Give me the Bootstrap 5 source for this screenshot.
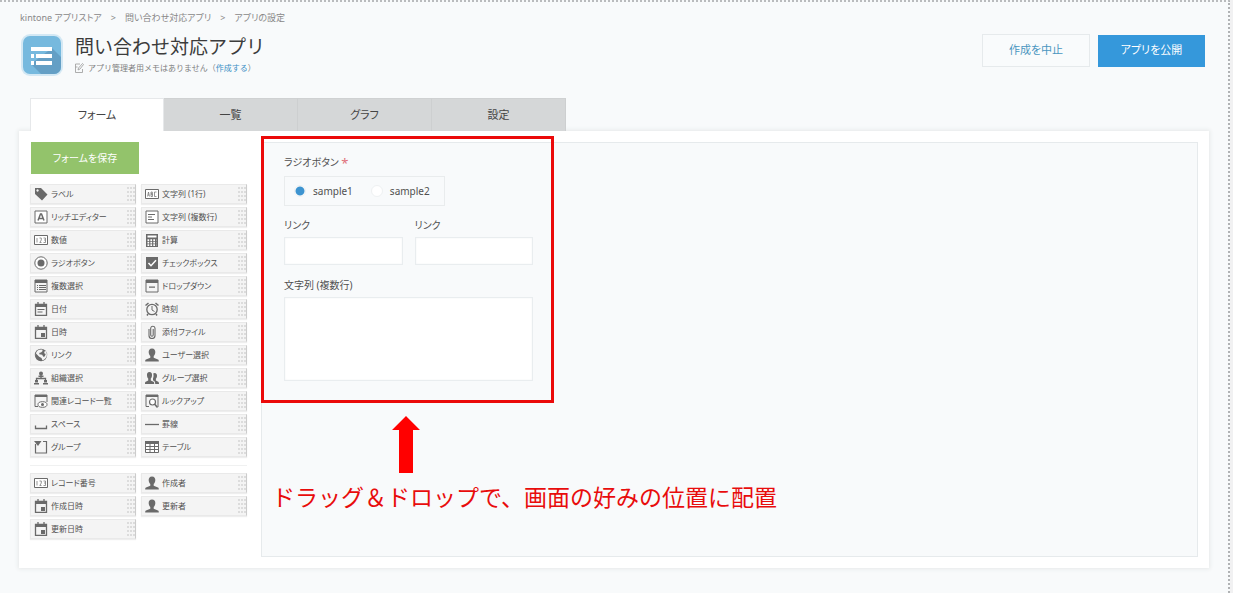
<!DOCTYPE html>
<html lang="ja">
<head>
<meta charset="utf-8">
<meta name="viewport" content="width=device-width, initial-scale=1">
<title>アプリの設定</title>
<link href="https://cdn.jsdelivr.net/npm/bootstrap@5.3.0/dist/css/bootstrap.min.css" rel="stylesheet">
<style>
  body { font-family: "Noto Sans", "Noto Sans CJK JP", sans-serif; font-size: 10px; line-height: 16px; color: #444; background: #f1f1f2; }
  body, button { font-feature-settings: "palt"; }
  a { color: #3a8fc4; text-decoration: none; }
  .shell { min-height: 100vh; margin-right: 3px; padding: 8px 19px 24px 19px; background: #f8fafb; border-top: 2px dotted #b9bbbd; border-right: 2px dotted #b0b2b4; }
  .crumbs { font-size: 9px; line-height: 16px; padding-left: 1px; --bs-breadcrumb-divider: ">"; }
  .crumbs .breadcrumb-item { color: #888; padding: 0; }
  .crumbs .breadcrumb-item a { color: #888; }
  .crumbs .breadcrumb-item + .breadcrumb-item::before { padding: 0 9px; color: #888; }
  .app-logo { width: 42px; height: 42px; margin: 0 12px 0 2px; }
  .app-title { font-size: 19px; line-height: 26px; font-weight: 400; color: #3c3c3c; font-feature-settings: normal; }
  .memo { font-size: 8px; line-height: 16px; color: #808080; font-feature-settings: normal; }
  .action { width: 108px; height: 33px; padding: 0; border-radius: 0; font-size: 11px; }
  .action-cancel { background: #f9fbfc; border: 1px solid #e6eaec; color: #4a96c0; }
  .action-publish { background: #3598db; border: 1px solid #3598db; color: #fff; width: 107px; height: 32px; }
  .action-save { background: #93c36b; border: 1px solid #93c36b; color: #fff; font-size: 10px; height: 32px; margin-left: 1px; }
  .app-tabs { padding-left: 11px; margin-top: 22px; border: 0; }
  .app-tabs .nav-link { width: 134px; height: 33px; padding: 0; border: 0; border-top: 1px solid #cfd1d2; border-right: 1px solid #cdcfd0; border-radius: 0; margin: 0; background: #d5d7d8; color: #444; font-size: 11px; text-align: center; }
  .app-tabs .nav-link.active { background: #fff; border-color: #e6e8ea; border-left: 1px solid #e6e8ea; color: #444; position: relative; z-index: 1; }
  .panel { background: #fff; padding: 11px; box-shadow: 0 0 4px 1px #e6e8e9; gap: 14px; }
  .palette { width: 217px; }
  .chips { display: grid; grid-template-columns: 1fr 1fr; gap: 3px 5px; }
  .save-row { margin-bottom: 10px; }
  .chip { display: flex; align-items: center; gap: 3px; height: 20px; padding: 0 0 1px 3px; border: 1px solid #e9e9e9; border-right-color: #ccc; background: #f4f4f4; color: #505050; font-size: 8px; line-height: 12px; text-align: left; white-space: nowrap; box-shadow: 0 1px 1px #eee; }
  .chip svg { width: 14px; height: 14px; color: #6a6a6a; flex: none; }
  .chip::after { content: ""; width: 8px; height: 14px; margin-left: auto; background: radial-gradient(circle at 1px 1px, #dcdcdc 1px, transparent 1px) 0 0 / 3px 4px; }
  .rule { height: 1px; background: #f0f1f1; margin: 8px 0 7px; }
  .stage { position: relative; min-height: 415px; border: 1px solid #e6eaec; background: #f8fafb; padding: 11px 22px; }
  .fields { width: 249px; }
  .fields label, .field-name { font-size: 10px; line-height: 16px; color: #505050; }
  .need { color: #e0707a; font-size: 13px; line-height: 12px; vertical-align: -2px; }
  .choices { width: 161px; height: 30px; border: 1px solid #e9eced; padding-left: 9px; gap: 7px; margin: 6px 0 11px; }
  .choices .form-check-input { width: 12px; height: 12px; margin: 0; background: #fff; border: 1px solid #eef1f2; box-shadow: none; }
  .choices .form-check-input:checked { background: radial-gradient(circle, #3d94d0 4px, #fff 5px); }
  .choices label + .form-check-input { margin-left: 11px; }
  .box { border: 1px solid #e9edef; border-radius: 0; background: #fff; padding: 4px; box-shadow: inset 0 0 2px #f0f2f3; font-size: 10px; resize: none; display: block; }
  .line { height: 28px; min-height: 28px; }
  .area { height: 84px; }
  .callout-box { position: absolute; left: -1px; top: -7px; width: 293px; height: 267px; border: 3px solid #eb0a0a; pointer-events: none; }
  .callout-note { position: absolute; left: 10px; top: 273px; color: #e80c0c; font-size: 23px; line-height: 32px; font-family: "Noto Sans CJK JP", sans-serif; font-feature-settings: normal; white-space: nowrap; }
  .callout-note svg { display: block; margin: 0 0 7px 120px; }
</style>
</head>
<body>
<svg class="d-none" aria-hidden="true">
  <defs>
    <symbol id="tag" viewBox="0 0 14 14"><path fill="currentColor" fill-rule="evenodd" d="M1 1h6l6.500 6.500-5.500 6L1 7zM3.500 2.300a1.200 1.200 0 1 0 .1 0z"/></symbol>
    <symbol id="abc" viewBox="0 0 14 14"><path fill="#fff" stroke="currentColor" d="M.5 2.500h13v9H.5z"/><path fill="none" stroke="currentColor" stroke-width=".7" d="M2.500 9.500 3.500 5l1 4.500M3 8h1M6 5v4.500h1.500V7H6h1.300V5zM11.500 5H9.500v4.500h2"/></symbol>
    <symbol id="rich" viewBox="0 0 14 14"><path fill="#fff" stroke="currentColor" d="M1 1h12v12H1z"/><path fill="none" stroke="currentColor" stroke-width="1.500" d="M4 10.500 6.500 4h1L10 10.500M5 8.500h4"/></symbol>
    <symbol id="multi" viewBox="0 0 14 14"><path fill="#fff" stroke="currentColor" d="M1 1h12v12H1z"/><path stroke="currentColor" d="M3 4.500h7M3 7h4M3 9.500h6"/></symbol>
    <symbol id="num" viewBox="0 0 14 14"><path fill="#fff" stroke="currentColor" d="M.5 2.500h13v9H.5z"/><path fill="none" stroke="currentColor" stroke-width=".7" d="M3 5v4.500M5.500 5H7.300v2L5.800 9.500h1.700M9.500 5h2v4.500h-2M10 7h1.500"/></symbol>
    <symbol id="calc" viewBox="0 0 14 14"><path fill="currentColor" d="M1 1h12v13H1z"/><path stroke="#fff" stroke-width="1.700" stroke-dasharray="1.700 1.200" d="M2.500 7.200h9M2.500 9.700h9M2.500 12.200h9"/><path fill="#fff" d="M2.500 2.500h9v2h-9z"/></symbol>
    <symbol id="radio" viewBox="0 0 14 14"><circle cx="7" cy="7" r="6.200" fill="#fff" stroke="currentColor"/><circle cx="7" cy="7" r="3.500" fill="currentColor"/></symbol>
    <symbol id="check" viewBox="0 0 14 14"><path fill="currentColor" d="M1 1h12v12H1z"/><path fill="none" stroke="#fff" stroke-width="1.500" d="m3.500 7 2.500 2.700 5-5.500"/></symbol>
    <symbol id="select" viewBox="0 0 14 14"><path fill="#f5f5f5" stroke="currentColor" d="M1 1h12v12H1z"/><path fill="currentColor" d="M1 1h12v3H1z"/><path stroke="currentColor" d="M3 6.500h1m1 0h7M3 8.500h1m1 0h7M3 10.500h1m1 0h7"/></symbol>
    <symbol id="drop" viewBox="0 0 14 14"><path fill="#f5f5f5" stroke="currentColor" d="M1 1h12v12H1z"/><path fill="currentColor" d="M1 1h12v3H1zM4 7.500h6v1.200H4z"/></symbol>
    <symbol id="date" viewBox="0 0 14 14"><path fill="none" stroke="currentColor" stroke-width="1.300" d="M1.500 2.500h11v10.800h-11zM4 0v3M10 0v3"/><path fill="currentColor" d="M1 2h12v3H1z"/><path stroke="currentColor" d="M3.500 7.500h7M3.500 10h5"/></symbol>
    <symbol id="clock" viewBox="0 0 14 14"><circle cx="7" cy="7.500" r="5.200" fill="none" stroke="currentColor" stroke-width="1.300"/><path fill="none" stroke="currentColor" d="M7 4v4l2.500 1.500"/><path stroke="currentColor" stroke-width="1.500" d="M.5 3.500 3.500 1M13.500 3.500 10.500 1M3 12l-1 1.500M11 12l1 1.500"/></symbol>
    <symbol id="datetime" viewBox="0 0 14 14"><path fill="none" stroke="currentColor" stroke-width="1.300" d="M1.500 2.500h11v10.800h-11zM4 0v3M10 0v3"/><path fill="currentColor" d="M1 2h12v3H1zM7 8h4v4H7z"/></symbol>
    <symbol id="clip" viewBox="0 0 14 14"><path fill="none" stroke="currentColor" stroke-width="1.100" d="M4 4v6.500a3 3 0 0 0 6 0V3a2.200 2.200 0 0 0-4.300 0v7a1.200 1.200 0 0 0 2.500 0V4"/></symbol>
    <symbol id="globe" viewBox="0 0 14 14"><circle cx="7" cy="7" r="6.200" fill="currentColor"/><path fill="#f4f4f4" d="M5 1.700 8.300 1.500 8.600 3 7 4.500l-1.500.3-.3 1.500 3 .4 1 2 1.500-.2 1-2.500-1.500-.8.200-1.700 1.300-.6c1.600 2.300 1.700 5 0 7.200-.9 1.200-2 1.900-3.300 2.200L7.500 10 5.200 8.700 2 5.500 1.700 8.500C1.500 5 2.500 2.700 5 1.700z"/></symbol>
    <symbol id="org" viewBox="0 0 14 14"><circle cx="7" cy="2.500" r="2" fill="currentColor"/><path fill="none" stroke="currentColor" stroke-width="1.300" d="M7 3v4M2.500 10V7.500h9V10"/><path fill="currentColor" d="M4.500 4.500h5V6h-5zM1 9h3v2.500H1zM10 9h3v2.500h-3zM0 12h5v1.500H0zM9 12h5v1.500H9z"/></symbol>
    <symbol id="user" viewBox="0 0 14 14"><path fill="currentColor" d="M7 .5c2.400 0 3.500 1.700 3.300 4C10.100 6.500 9.300 7.500 8.700 8v1.800l4.300 1.700c.7.400.8 1 .8 2H.2c0-1 .1-1.600.8-2l4.300-1.700V8C4.700 7.500 3.900 6.500 3.700 4.500 3.500 2.200 4.600.5 7 .5z"/></symbol>
    <symbol id="users" viewBox="0 0 14 14"><path fill="currentColor" d="M4.500 1C6.400 1 7.200 2.500 7 4.500c-.1 1.500-.6 2.500-1.200 3v2l2.700 1.300c.6.300.7 1 .7 2.200H0c0-1.200.1-1.900.7-2.200l2.500-1.300v-2C2.600 7 2.100 6 2 4.500 1.800 2.500 2.600 1 4.500 1zM9.500 2c1.900 0 2.700 1.500 2.500 3.200-.1 1.300-.6 2-1.100 2.500v1.800l2.300 1.300c.7.400.8 1.200.8 2.200h-3.800c0-1.700-.2-2.500-1.200-3L8 9.300V7.500c.6-1.500.8-3.200.2-5z"/></symbol>
    <symbol id="related" viewBox="0 0 14 14"><path fill="none" stroke="currentColor" d="M4 12.500H1V1h12v7"/><path fill="currentColor" d="M1 1h12v2H1z"/><ellipse cx="8.500" cy="10.500" rx="4.500" ry="2.800" fill="#fff" stroke="currentColor"/><circle cx="8.500" cy="10.500" r="1.500" fill="currentColor"/></symbol>
    <symbol id="lookup" viewBox="0 0 14 14"><path fill="none" stroke="currentColor" d="M4 12.500H1V1h12v12"/><path fill="currentColor" d="M1 1h12v2H1z"/><circle cx="7.500" cy="8" r="3" fill="#fff" stroke="currentColor" stroke-width="1.200"/><path stroke="currentColor" stroke-width="1.500" d="m9.500 10 3 3.500"/></symbol>
    <symbol id="space" viewBox="0 0 14 14"><path fill="none" stroke="currentColor" stroke-width="1.300" d="M1.500 8.500v3h11v-3"/></symbol>
    <symbol id="hr" viewBox="0 0 14 14"><path stroke="currentColor" stroke-width="1.300" d="M0 7.500h14"/></symbol>
    <symbol id="group" viewBox="0 0 14 14"><path fill="none" stroke="currentColor" stroke-width="1.200" d="M1.500 4v9h11V1.500H9"/><path fill="currentColor" d="M0 1h7.500L4 6z"/></symbol>
    <symbol id="grid" viewBox="0 0 14 14"><path fill="#fff" stroke="currentColor" d="M.5 1.500h13v11H.5zM.5 6.500h13M.5 9.500h13M5 3v9.500M9.500 3v9.500"/><path fill="currentColor" d="M0 1h14v3H0z"/></symbol>
  </defs>
</svg>

<div class="shell">
  <nav aria-label="パンくず"><ol class="breadcrumb crumbs mb-0">
    <li class="breadcrumb-item"><a href="#">kintone アプリストア</a></li>
    <li class="breadcrumb-item"><a href="#">問い合わせ対応アプリ</a></li>
    <li class="breadcrumb-item active">アプリの設定</li>
  </ol></nav>

  <header class="d-flex align-items-start pt-2">
    <svg class="app-logo flex-shrink-0" viewBox="0 0 42 42" aria-hidden="true">
      <defs><clipPath id="round"><rect x="2" y="2" width="38" height="38" rx="7"/></clipPath></defs>
      <rect width="42" height="42" rx="9" fill="#d3e8f4"/>
      <g clip-path="url(#round)"><path fill="#76b9de" d="M0 0h42v42H0z"/><path fill="#649fc5" d="M31 14 44 27v17H24L10 30z"/></g>
      <path fill="#fff" d="M10 13h21v4H10zM10 20h3v4h-3zM15 20h16v4H15zM10 27h3v4h-3zM15 27h16v4H15z"/>
    </svg>
    <div>
      <h1 class="app-title mb-0">問い合わせ対応アプリ</h1>
      <div class="memo d-flex align-items-center gap-1">
        <svg width="9" height="10" viewBox="0 0 9 10" fill="none" stroke="#999" aria-hidden="true"><path d="M5 1H.5v8.500h7V6M.5 4h2M3 7l.5-2L7.500.5l1 1L5 6z" stroke-width=".8"/></svg>
        <span>アプリ管理者用メモはありません（<a href="#">作成する</a>）</span>
      </div>
    </div>
    <div class="ms-auto d-flex align-items-center gap-1 me-1">
      <button type="button" class="btn action action-cancel me-1">作成を中止</button>
      <button type="button" class="btn action action-publish">アプリを公開</button>
    </div>
  </header>

  <ul class="nav nav-tabs app-tabs">
    <li class="nav-item"><button type="button" class="nav-link active">フォーム</button></li>
    <li class="nav-item"><button type="button" class="nav-link">一覧</button></li>
    <li class="nav-item"><button type="button" class="nav-link">グラフ</button></li>
    <li class="nav-item"><button type="button" class="nav-link">設定</button></li>
  </ul>

  <main class="panel d-flex">
    <aside class="palette flex-shrink-0">
      <div class="save-row d-flex"><button type="button" class="btn action action-save">フォームを保存</button></div>
      <div class="chips">
        <button type="button" class="chip"><svg><use href="#tag"/></svg>ラベル</button>
        <button type="button" class="chip"><svg><use href="#abc"/></svg>文字列 (1行)</button>
        <button type="button" class="chip"><svg><use href="#rich"/></svg>リッチエディター</button>
        <button type="button" class="chip"><svg><use href="#multi"/></svg>文字列 (複数行)</button>
        <button type="button" class="chip"><svg><use href="#num"/></svg>数値</button>
        <button type="button" class="chip"><svg><use href="#calc"/></svg>計算</button>
        <button type="button" class="chip"><svg><use href="#radio"/></svg>ラジオボタン</button>
        <button type="button" class="chip"><svg><use href="#check"/></svg>チェックボックス</button>
        <button type="button" class="chip"><svg><use href="#select"/></svg>複数選択</button>
        <button type="button" class="chip"><svg><use href="#drop"/></svg>ドロップダウン</button>
        <button type="button" class="chip"><svg><use href="#date"/></svg>日付</button>
        <button type="button" class="chip"><svg><use href="#clock"/></svg>時刻</button>
        <button type="button" class="chip"><svg><use href="#datetime"/></svg>日時</button>
        <button type="button" class="chip"><svg><use href="#clip"/></svg>添付ファイル</button>
        <button type="button" class="chip"><svg><use href="#globe"/></svg>リンク</button>
        <button type="button" class="chip"><svg><use href="#user"/></svg>ユーザー選択</button>
        <button type="button" class="chip"><svg><use href="#org"/></svg>組織選択</button>
        <button type="button" class="chip"><svg><use href="#users"/></svg>グループ選択</button>
        <button type="button" class="chip"><svg><use href="#related"/></svg>関連レコード一覧</button>
        <button type="button" class="chip"><svg><use href="#lookup"/></svg>ルックアップ</button>
        <button type="button" class="chip"><svg><use href="#space"/></svg>スペース</button>
        <button type="button" class="chip"><svg><use href="#hr"/></svg>罫線</button>
        <button type="button" class="chip"><svg><use href="#group"/></svg>グループ</button>
        <button type="button" class="chip"><svg><use href="#grid"/></svg>テーブル</button>
      </div>
      <div class="rule"></div>
      <div class="chips">
        <button type="button" class="chip"><svg><use href="#num"/></svg>レコード番号</button>
        <button type="button" class="chip"><svg><use href="#user"/></svg>作成者</button>
        <button type="button" class="chip"><svg><use href="#datetime"/></svg>作成日時</button>
        <button type="button" class="chip"><svg><use href="#user"/></svg>更新者</button>
        <button type="button" class="chip"><svg><use href="#datetime"/></svg>更新日時</button>
      </div>
    </aside>

    <section class="stage flex-grow-1">
      <form class="fields">
        <div class="field-name" id="radio-name">ラジオボタン <span class="need">*</span></div>
        <div class="choices d-flex align-items-center" role="radiogroup" aria-labelledby="radio-name">
          <input class="form-check-input" type="radio" name="sample" id="s1" checked><label for="s1">sample1</label>
          <input class="form-check-input" type="radio" name="sample" id="s2"><label for="s2">sample2</label>
        </div>
        <div class="row g-0 gap-2">
          <div class="col me-1"><label for="link1">リンク</label><input type="text" id="link1" class="form-control box line mt-1"></div>
          <div class="col"><label for="link2">リンク</label><input type="text" id="link2" class="form-control box line mt-1"></div>
        </div>
        <div class="mt-2 pt-1"><label for="memo">文字列 (複数行)</label><textarea id="memo" class="form-control box area mt-1"></textarea></div>
      </form>
      <div class="callout-box"></div>
      <div class="callout-note">
        <svg width="28" height="57" viewBox="0 0 28 57" aria-hidden="true"><path fill="#f00" d="M14 0 28 14h-7v43H7V14H0z"/></svg>
        ドラッグ＆ドロップで、画面の好みの位置に配置
      </div>
    </section>
  </main>
</div>
<script src="https://cdn.jsdelivr.net/npm/bootstrap@5.3.0/dist/js/bootstrap.bundle.min.js"></script>
</body>
</html>
